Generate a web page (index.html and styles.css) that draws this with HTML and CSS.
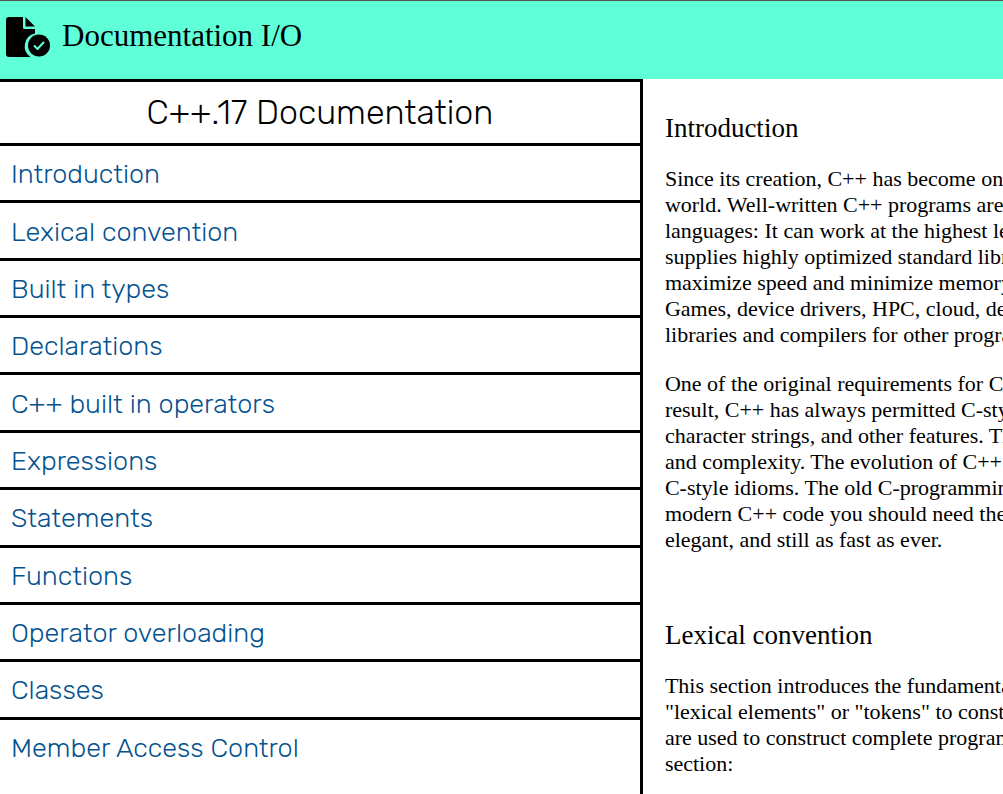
FILE: index.html
```
<!DOCTYPE html>
<html lang="en">
<head>
<meta charset="utf-8">
<title>Documentation I/O</title>
<link rel="stylesheet" href="styles.css">
</head>
<body>
<header class="topbar">
  <svg class="logo" viewBox="0 0 44 40" aria-hidden="true">
    <path d="M3 0H17V10.500Q17 12 18.500 12H29V16.500A13 13 0 0 0 24.500 40H3Q0 40 0 37V3Q0 0 3 0Z"/>
    <path d="M19.500 0L29 9.500H19.500Z"/>
    <circle cx="33" cy="28.500" r="11"/>
    <path class="logo-check" d="M28.500 29L31.500 32L37.500 25.500"/>
  </svg>
  <h1 class="brand">Documentation I/O</h1>
</header>
<div class="layout">
  <nav class="sidebar" aria-labelledby="nav-title">
    <h2 class="nav-title" id="nav-title">C++.17 Documentation</h2>
    <ul class="nav-list">
      <li><a href="#introduction">Introduction</a></li>
      <li><a href="#lexical-convention">Lexical convention</a></li>
      <li><a href="#types">Built in types</a></li>
      <li><a href="#declarations">Declarations</a></li>
      <li><a href="#operators">C++ built in operators</a></li>
      <li><a href="#expressions">Expressions</a></li>
      <li><a href="#statements">Statements</a></li>
      <li><a href="#functions">Functions</a></li>
      <li><a href="#overloading">Operator overloading</a></li>
      <li><a href="#classes">Classes</a></li>
      <li><a href="#access">Member Access Control</a></li>
    </ul>
  </nav>
  <main class="content">
    <section id="introduction">
      <h2>Introduction</h2>
      <p>Since its creation, C++ has become one<br>
      world. Well-written C++ programs are<br>
      languages: It can work at the highest levels<br>
      supplies highly optimized standard libraries.<br>
      maximize speed and minimize memory<br>
      Games, device drivers, HPC, cloud, desktop,<br>
      libraries and compilers for other programming</p>
      <p>One of the original requirements for C++<br>
      result, C++ has always permitted C-style<br>
      character strings, and other features. They<br>
      and complexity. The evolution of C++<br>
      C-style idioms. The old C-programming<br>
      modern C++ code you should need them<br>
      elegant, and still as fast as ever.</p>
    </section>
    <section id="lexical-convention">
      <h2>Lexical convention</h2>
      <p>This section introduces the fundamental<br>
      "lexical elements" or "tokens" to construct<br>
      are used to construct complete programs.<br>
      section:</p>
    </section>
  </main>
</div>
</body>
</html>
```
FILE: styles.css
```
* {
  box-sizing: border-box;
}

body {
  display: flex;
  flex-direction: column;
  height: 100vh;
  margin: 0;
  overflow: hidden;
  color: #000;
  background: #fff;
  font-family: "Liberation Serif", "Times New Roman", serif;
}

h1, h2 {
  margin: 0;
  font-weight: 400;
}

.topbar {
  display: flex;
  align-items: flex-start;
  gap: 12px;
  padding: 16px 6px 22px;
  border-top: 1px solid #555;
  background: #5fffd8;
}

.logo {
  width: 44px;
  height: 40px;
}

.logo-check {
  fill: none;
  stroke: #5fffd8;
  stroke-width: 2;
  stroke-linecap: round;
  stroke-linejoin: round;
}

.brand {
  font-size: 31px;
  line-height: 38px;
}

.layout {
  display: flex;
  flex: 1;
  min-height: 0;
}

.sidebar {
  display: flex;
  flex: 0 0 calc(64% + 1px);
  flex-direction: column;
  padding-bottom: 20px;
  border: solid #000;
  border-width: 3px 3px 0 0;
  font-family: Rubik, Roboto, sans-serif;
}

.nav-title {
  padding-top: 1px;
  font-size: 34px;
  font-weight: 300;
  line-height: 60px;
  text-align: center;
}

.nav-list {
  display: grid;
  flex: 1;
  grid-auto-rows: 1fr;
  margin: 0;
  padding: 0;
  list-style: none;
}

.nav-list li {
  display: flex;
  align-items: center;
  padding: 2px 11px 0;
  border-top: 3px solid #000;
}

.nav-list a {
  color: #04528f;
  font-size: 27px;
  font-weight: 300;
  line-height: 32px;
  text-decoration: none;
}

.content {
  flex: 1;
  min-width: 0;
  padding: 34px 0 0 22px;
  overflow: hidden;
  white-space: nowrap;
}

.content section {
  margin-bottom: 67px;
}

.content h2 {
  font-size: 27px;
  line-height: 30px;
}

.content p {
  margin: 23px 0 0;
  font-size: 22px;
  line-height: 26px;
}
```
